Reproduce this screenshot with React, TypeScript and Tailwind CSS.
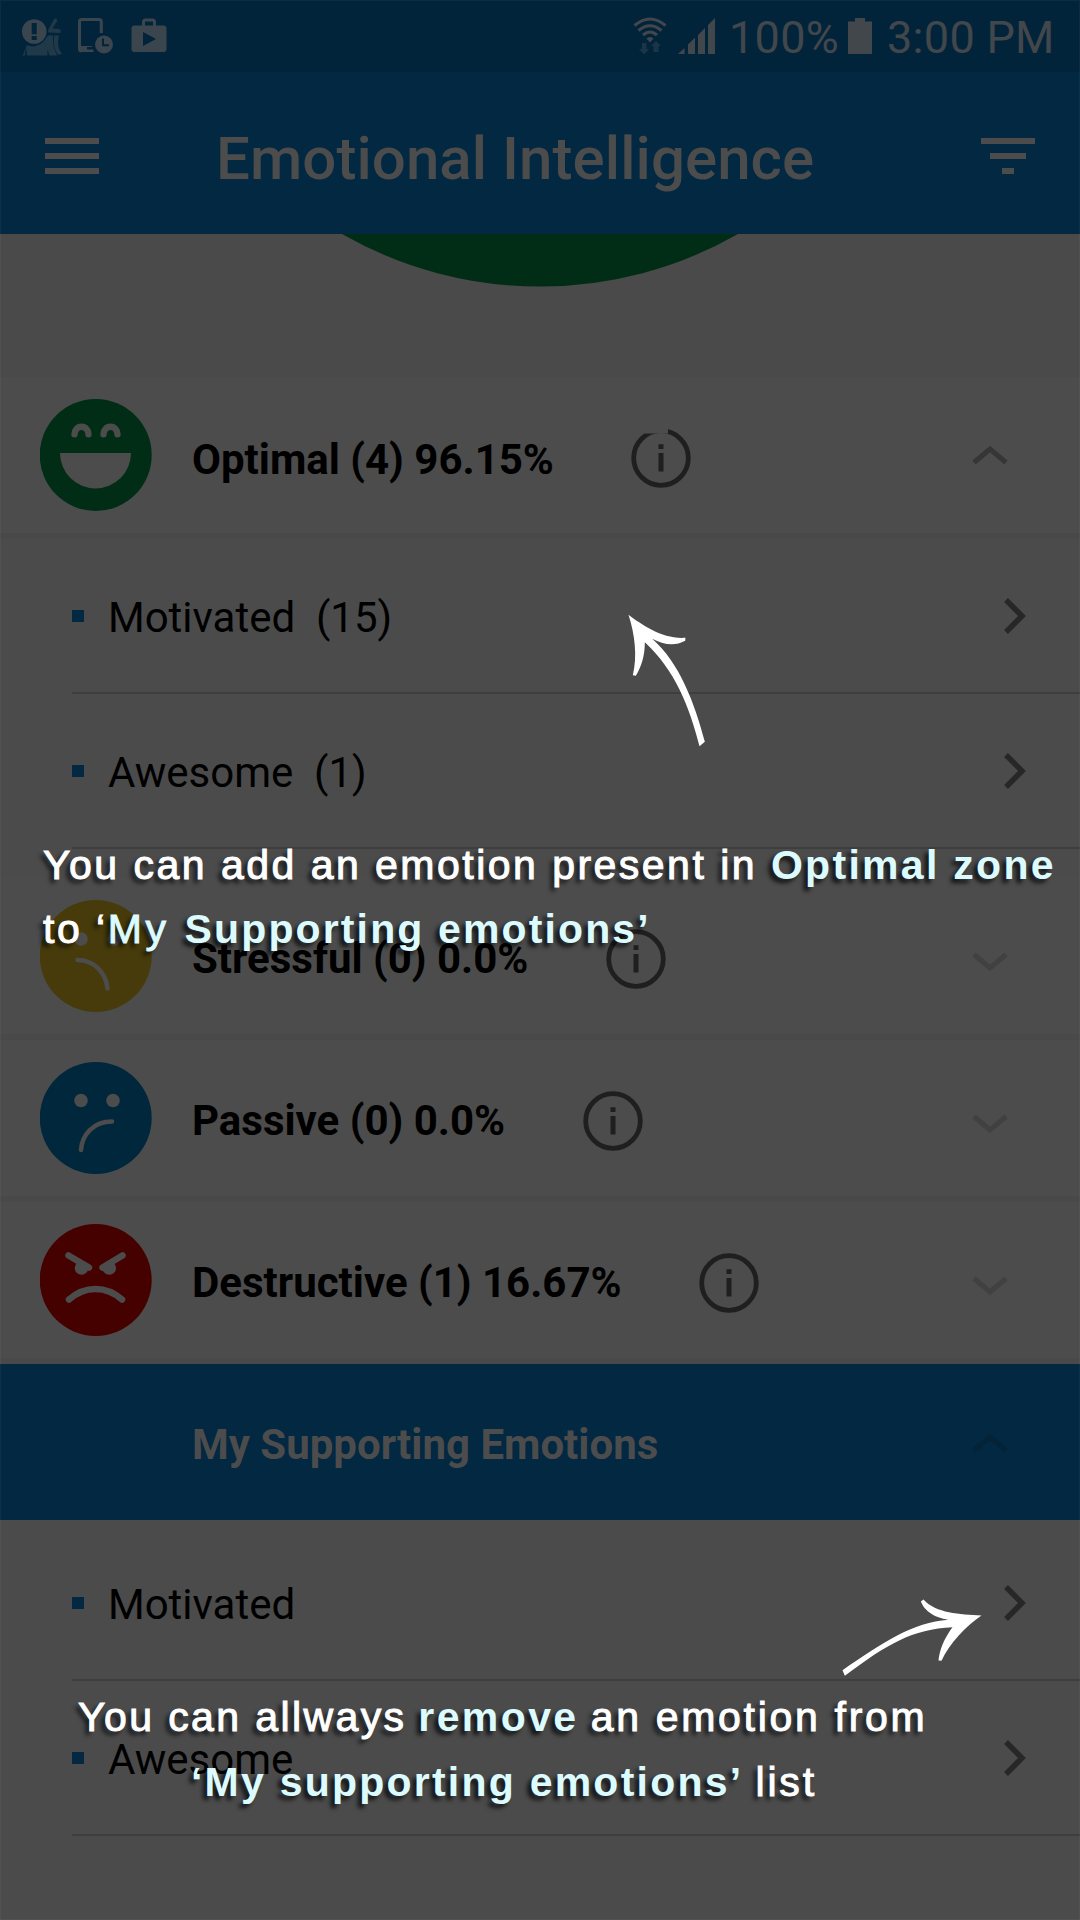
import type { ReactNode } from 'react';

type Zone = 'optimal' | 'stressful' | 'passive' | 'destructive';

function StatusBar() {
  return (
    <div className="flex h-[72px] items-center bg-[#02243b] pl-[21px] text-[#42474b]">
      <svg width="42" height="38" viewBox="0 0 42 38" className="mt-0.5 fill-[#3b454d]">
        <g className="fill-[#203848]">
          <path d="M6 27 Q13 31 22 24 L27 17.5 H32 Q31 27 36 37.500 H28.500 Q27 35 27 31 Q26 35 26.500 37.500 H6 Q6 33 5 30 L4 37.500 H1.500 Z" />
          <path d="M33 17.500 H38 Q35 29 41 35.500 L37 37 Q31.500 29 33 17.500 Z" />
        </g>
        <path d="M32.500 2 Q34 -.5 36 1.500 Q36.500 3 35.500 4 L31.500 10.500 L38.500 11 Q40.500 12 39.500 15 L27.500 14.500 Q26.500 12 28 10.500 Z" fill="#203848" />
        <circle cx="13.200" cy="13.500" r="13.300" fill="#02243b" />
        <circle cx="13.200" cy="13.500" r="12.300" />
        <path d="M10.700 5 H15.700 V16.200 H10.700 Z M10.700 18 H15.700 V22 H10.700 Z" fill="#02243b" />
      </svg>
      <svg width="36" height="36" viewBox="0 0 36 36" className="ml-[15px]">
        <path d="M23.300 15 V3.500 Q23.300 1.500 21.300 1.500 H3.500 Q1.500 1.500 1.500 3.500 V31 Q1.500 33 3.500 33" fill="none" stroke="#3b454d" strokeWidth="3" />
        <path d="M2 28 H14 V29 H9 V31.500 H15.500 V34 H3.500 Q2 33.500 2 32 Z" fill="#3b454d" />
        <circle cx="26" cy="26.500" r="9" fill="#3b454d" />
        <path d="M25 20.500 V27.300 H31" fill="none" stroke="#02243b" strokeWidth="2" />
      </svg>
      <svg width="36" height="36" viewBox="0 0 36 36" className="ml-[17px] fill-[#3b454d]">
        <path d="M12.500 8 V4 Q12.500 2 14.500 2 H21.500 Q23.500 2 23.500 4 V8" fill="none" stroke="#3b454d" strokeWidth="3" />
        <path fillRule="evenodd" d="M3.500 7.500 H32.500 Q35.500 7.500 35.500 10.500 V31 Q35.500 34 32.500 34 H3.500 Q.5 34 .5 31 V10.500 Q.5 7.500 3.500 7.500 Z M12 14 V28 L25 21 Z" />
      </svg>
      <svg width="34" height="38" viewBox="0 0 34 38" className="ml-[466px] fill-none stroke-[#42474b]">
        <g strokeWidth="3">
          <path d="M1.500 8.500 Q17 -4.500 32.500 8.500" />
          <path d="M5.500 13.500 Q17 4 28.500 13.500" />
          <path d="M10 18 Q17 12 24 18" />
        </g>
        <path d="M13.500 21.500 Q17 18.500 20.500 21.500 L17 25.500 Z" fill="#42474b" stroke="none" />
        <path d="M9 26 H13.500 V32 H16 L11.200 37.500 L6 32 H9 Z M20.500 35 V29 H18 L23 24 L28 29 H25.500 V35 Z" fill="#1b3546" stroke="none" />
      </svg>
      <svg width="37" height="36" viewBox="0 0 37 36" className="ml-[11px] fill-[#42474b]">
        <path d="M0 36 L6.500 30 V36 Z M10 36 V26.500 L17 19.500 V36 Z M20 36 V17 L27 10 V36 Z M30 36 V7 L37 0 V36 Z" />
      </svg>
      <span className="ml-3.5 mt-[3px] w-[119px] text-[45px] leading-none tracking-[.3px]">100%</span>
      <svg width="24" height="36" viewBox="0 0 24 36" className="fill-[#42474b]">
        <path d="M7 0 H17 V3.500 H24 V36 H0 V3.500 H7 Z" />
      </svg>
      <span className="ml-[15px] mt-[3px] whitespace-nowrap text-[45px] leading-none tracking-[.3px]">3:00 PM</span>
    </div>
  );
}

function Header() {
  return (
    <header className="flex h-[162px] items-center bg-[#022842] pl-[45px] pr-[45px] pt-1.5">
      <div className="flex w-[54px] flex-col gap-[9px]">
        <div className="h-1.5 bg-[#4c4c4c]" />
        <div className="h-1.5 bg-[#4c4c4c]" />
        <div className="h-1.5 bg-[#4c4c4c]" />
      </div>
      <h1 className="ml-[117px] mt-1.5 flex-1 whitespace-nowrap text-[60px] font-medium leading-none tracking-[.06px] text-[#4c4c4c]">
        Emotional Intelligence
      </h1>
      <div className="flex w-[54px] flex-col items-center gap-[9px]">
        <div className="h-1.5 w-[54px] bg-[#4c4c4c]" />
        <div className="h-1.5 w-9 bg-[#4c4c4c]" />
        <div className="h-1.5 w-3 bg-[#4c4c4c]" />
      </div>
    </header>
  );
}

const faceColor: Record<Zone, string> = {
  optimal: '#012d17',
  stressful: '#473b0b',
  passive: '#00273b',
  destructive: '#450000',
};

const faceFeatures: Record<Zone, ReactNode> = {
  optimal: (
    <>
      <path d="M20 54 H91 A35.500 35.500 0 0 1 20 54 Z" fill="#4c4c4c" stroke="none" />
      <path d="M34.500 35.200 A7 7.500 0 0 1 48.500 35.200 M63.500 35.200 A7 7.500 0 0 1 77.500 35.200" strokeWidth="6.400" />
    </>
  ),
  stressful: (
    <>
      <circle cx="41" cy="39" r="6.800" fill="#4c4c4c" stroke="none" />
      <circle cx="74" cy="39" r="6.800" fill="#4c4c4c" stroke="none" />
      <path d="M37.500 60 C54 60 66 73 67.500 88.500" strokeWidth="4.500" />
    </>
  ),
  passive: (
    <>
      <circle cx="41" cy="38.500" r="6.800" fill="#4c4c4c" stroke="none" />
      <circle cx="73" cy="38.500" r="6.800" fill="#4c4c4c" stroke="none" />
      <path d="M41 88 C42 73 53 59.500 72 59.500" strokeWidth="4.500" />
    </>
  ),
  destructive: (
    <>
      <path d="M28.500 31.500 L49 43.500 M82.500 31.500 L62.500 43.500" strokeWidth="6.500" />
      <circle cx="41.500" cy="44" r="6.800" fill="#4c4c4c" stroke="none" />
      <circle cx="69.300" cy="44" r="6.800" fill="#4c4c4c" stroke="none" />
      <path d="M29 75.500 C45 61.500 66 61.500 82 75.500" strokeWidth="6.500" />
    </>
  ),
};

function Face({ zone }: { zone: Zone }) {
  return (
    <svg width="112" height="112" viewBox="0 0 112 112" className="shrink-0">
      <circle cx="55.700" cy="56" r="56" fill={faceColor[zone]} />
      <g fill="none" stroke="#4c4c4c" strokeLinecap="round">{faceFeatures[zone]}</g>
    </svg>
  );
}

function InfoIcon({ clipped }: { clipped?: boolean }) {
  return (
    <svg width="60" height="60" viewBox="0 0 60 60" className="mt-[6px] shrink-0">
      <clipPath id="ring">
        <path d="M37 0 H60 V60 H0 V5.500 H37 Z" />
      </clipPath>
      <circle cx="30" cy="30" r="27.300" fill="none" stroke="#1f1f1f" strokeWidth="4.800" clipPath={clipped ? 'url(#ring)' : undefined} />
      <path d="M27.500 16.200 H32.500 V21 H27.500 Z M27.500 25 H32.500 V43.500 H27.500 Z" fill="#1f1f1f" />
    </svg>
  );
}

function Chevron({ up, className }: { up?: boolean; className: string }) {
  return (
    <svg width="36" height="20" viewBox="0 0 36 20" className={className} fill="none" strokeWidth="5">
      <path d={up ? 'M2 17.500 L18 4 L34 17.500' : 'M2 2.500 L18 16 L34 2.500'} />
    </svg>
  );
}

function ZoneRow({ zone, label, open }: { zone: Zone; label: string; open?: boolean }) {
  return (
    <div className="flex h-[162px] items-center border-b-[6px] border-[#494949] bg-[#4c4c4c] pl-[40px] pr-[72px]">
      <Face zone={zone} />
      <span
        className={
          open
            ? 'ml-[40px] mt-[9px] whitespace-nowrap text-[42px] font-bold leading-none text-black'
            : 'ml-[40px] mt-[5px] whitespace-nowrap text-[42px] font-bold leading-none text-black'
        }
      >
        {label}
      </span>
      <div className="ml-[77.5px] flex-1">
        <InfoIcon clipped={open} />
      </div>
      <Chevron up={open} className={open ? 'stroke-[#363636]' : 'mt-[12px] stroke-[#414141]'} />
    </div>
  );
}

function EmotionRow({ label }: { label: string }) {
  return (
    <div className="ml-[72px] flex h-[155px] items-center border-b-2 border-[#3e3e3e] pr-[53px]">
      <div className="h-3 w-3 bg-[#022842]" />
      <span className="ml-6 mt-[4px] flex-1 whitespace-pre text-[42px] leading-none text-black">{label}</span>
      <svg width="24" height="38" viewBox="0 0 24 38" fill="none" stroke="#272727" strokeWidth="5.500">
        <path d="M3 3 L19 19 L3 35" />
      </svg>
    </div>
  );
}

function Coach() {
  return (
    <div className="pointer-events-none absolute inset-0 font-['Liberation_Sans',sans-serif] text-[41px] leading-[64px] text-white">
      <div className="absolute inset-0 border border-white/[.04]" />
      <svg width="1080" height="1920" viewBox="0 0 1080 1920" className="absolute inset-0 fill-white">
        <g transform="translate(559.500 379.500) scale(.33333)">
          <path d="M207 706 C250 738 310 780 378 775 L377 784 C345 802 310 795 278 778 C360 850 405 970 436 1087 L420 1100 C390 980 345 870 256 788 C256 830 245 862 229 889 L220 887 C234 830 226 765 207 706 Z" />
        </g>
        <g transform="translate(779.500 1399.500) scale(.33333)">
          <path d="M606 648 C540 644 470 642 432 600 L424 606 C440 645 480 656 507 661 C400 668 310 730 189 812 L196 829 C320 735 400 688 519 683 C495 715 480 750 477 783 L486 784 C510 730 560 680 606 648 Z" />
        </g>
      </svg>
      <p className="absolute left-[43px] top-[833px] whitespace-nowrap [text-shadow:-4px_4px_4px_rgba(0,0,0,.75)]">
        <span className="tracking-[2.48px] [-webkit-text-stroke:1px_#fff]">You can add an emotion present in </span>
        <b className="tracking-[2.3px] text-[#dcfbff]">Optimal zone</b>
        <br />
        <span className="tracking-[2.5px] [-webkit-text-stroke:1px_#fff]">to ‘</span>
        <span className="tracking-[3.6px] text-[#dcfbff] [-webkit-text-stroke:1px_#dcfbff]">My </span>
        <b className="tracking-[2.13px] text-[#dcfbff]">Supporting emotions’</b>
      </p>
      <p className="absolute left-[78px] top-[1685px] whitespace-nowrap leading-[64.5px] [text-shadow:-4px_4px_4px_rgba(0,0,0,.75)]">
        <span className="tracking-[2.4px] [-webkit-text-stroke:1px_#fff]">You can allways </span>
        <b className="ml-[-2px] tracking-[2.4px] text-[#dcfbff]">remove</b>
        <span className="ml-[-2px] tracking-[2.7px] [-webkit-text-stroke:1px_#fff]"> an emotion from</span>
        <br />
        <b className="ml-[113px] tracking-[2.23px] text-[#dcfbff]">‘My supporting emotions’</b>
        <span className="ml-[-2px] tracking-[2.8px] [-webkit-text-stroke:1px_#fff]"> list</span>
      </p>
    </div>
  );
}

export default function App() {
  return (
    <div className="relative h-[1920px] w-[1080px] overflow-hidden bg-[#4b4b4b] font-[Roboto,sans-serif]">
      <StatusBar />
      <Header />
      <div className="flex h-[143px] justify-center bg-[#4a4a4a]">
        <svg width="400" height="54" viewBox="0 0 400 54">
          <path d="M2 0 A399 399 0 0 0 398 0 Z" fill="#012d17" />
        </svg>
      </div>
      <ZoneRow zone="optimal" label="Optimal (4) 96.15%" open />
      <EmotionRow label="Motivated  (15)" />
      <EmotionRow label="Awesome  (1)" />
      <div className="h-[29px]" />
      <ZoneRow zone="stressful" label="Stressful (0) 0.0%" />
      <ZoneRow zone="passive" label="Passive (0) 0.0%" />
      <ZoneRow zone="destructive" label="Destructive (1) 16.67%" />
      <div className="mb-[6px] flex h-[156px] items-center bg-[#022842] pl-[192px] pr-[72px]">
        <span className="mt-[5px] flex-1 text-[42px] font-bold leading-none text-[#4c4c4c]">My Supporting Emotions</span>
        <Chevron up className="mt-px stroke-[#022338]" />
      </div>
      <EmotionRow label="Motivated" />
      <EmotionRow label="Awesome" />
      <Coach />
    </div>
  );
}
